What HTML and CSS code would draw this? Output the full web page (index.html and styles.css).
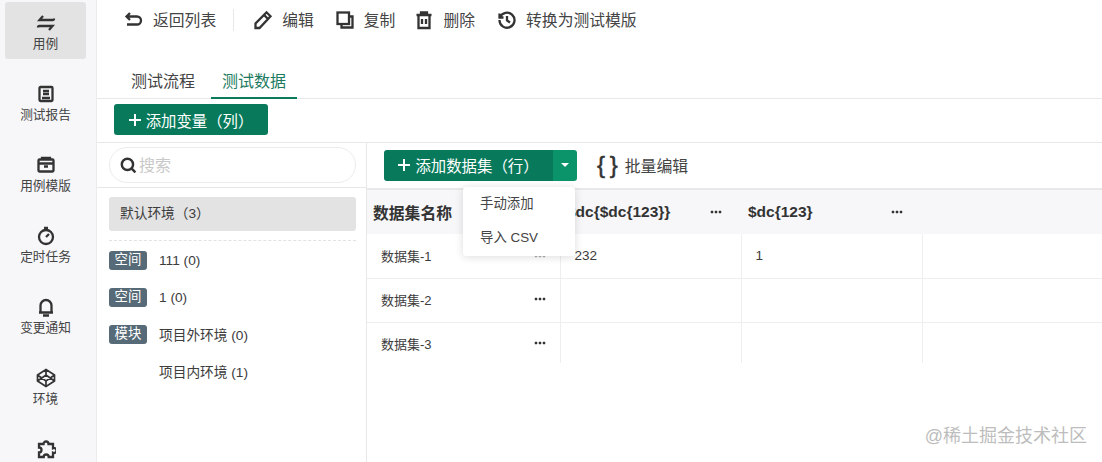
FILE: index.html
```html
<!DOCTYPE html>
<html lang="zh-CN">
<head>
<meta charset="utf-8">
<title>测试数据</title>
<link rel="stylesheet" href="styles.css">
</head>
<body>
<aside class="nav">
  <a class="nav-item active">
    <svg class="nav-icon" viewBox="0 0 20 20"><path d="M7 3 3.500 7 H16.500M13 17 16.500 13H3.500M16.500 7q1.500 0 1.500-1.500M2 14.500q0-1.500 1.500-1.500"/></svg>
    <span>用例</span>
  </a>
  <a class="nav-item">
    <svg class="nav-icon" viewBox="0 0 20 20"><rect x="3.500" y="3" width="13" height="14" rx="1"/><path d="M7 7h6M7 10h6M6 14h8"/></svg>
    <span>测试报告</span>
  </a>
  <a class="nav-item">
    <svg class="nav-icon" viewBox="0 0 20 20"><rect x="2.500" y="4.500" width="15" height="12" rx="1"/><path d="M2.500 8.500h15M8 11.500h4M6 4V2.800h8V4"/></svg>
    <span>用例模版</span>
  </a>
  <a class="nav-item">
    <svg class="nav-icon" viewBox="0 0 20 20"><circle cx="10" cy="11" r="7"/><path d="M8 2h4M10 11l3-3"/></svg>
    <span>定时任务</span>
  </a>
  <a class="nav-item">
    <svg class="nav-icon" viewBox="0 0 20 20"><path d="M3 15.500h14M4.500 15.500V8.500a5.500 5.500 0 0 1 11 0v7M7 18.500h6"/></svg>
    <span>变更通知</span>
  </a>
  <a class="nav-item">
    <svg class="nav-icon nav-icon-thin" viewBox="0 0 20 20"><path d="M10 1.500 18.500 7V13L10 18.500 1.500 13V7ZM1.500 7 10 13 18.500 7M1.500 13 10 7 18.500 13M10 1.500V7M10 13V18.500"/></svg>
    <span>环境</span>
  </a>
  <a class="nav-item">
    <svg class="nav-icon" viewBox="0 0 20 20"><path d="M7.500 5a2.500 2.500 0 1 1 5 0H17v4.200a2.500 2.500 0 1 1 0 4.600V18h-4.300a2.500 2.500 0 1 0-5 0H3v-4.500a2.500 2.500 0 1 0 0-5V5Z"/></svg>
  </a>
</aside>

<main class="main">
  <div class="toolbar">
    <button class="tool tool-back">
      <svg class="tool-icon" viewBox="0 0 20 20"><path d="M6 3 2.500 6.500 6 10M3 6.500h10a3.800 3.800 0 0 1 0 8H3"/></svg>
      返回列表
    </button>
    <span class="tool-sep"></span>
    <button class="tool">
      <svg class="tool-icon" viewBox="0 0 20 20"><path d="M2.500 18v-4.500L11 5l4 4-8.500 9ZM11 5l2.500-2.700 4 4L15 9"/></svg>
      编辑
    </button>
    <button class="tool tool-copy">
      <svg class="tool-icon" viewBox="0 0 20 20"><rect x="2.500" y="2.500" width="11.500" height="11.500"/><path d="M14 6.500h3.500v11h-11V14"/></svg>
      复制
    </button>
    <button class="tool tool-trash">
      <svg class="tool-icon" viewBox="0 0 20 20"><path d="M2.500 5h15M7 5V2.500h6V5M4.500 5v13h11V5M8 9v5M12 9v5"/></svg>
      删除
    </button>
    <button class="tool">
      <svg class="tool-icon" viewBox="0 0 20 20"><path d="M2.500 3.500v4h4M3 7.500A7.500 7.500 0 1 1 2.500 10M10 6v4.500l3 2"/></svg>
      转换为测试模版
    </button>
  </div>

  <div class="tabs">
    <span class="tab">测试流程</span>
    <span class="tab tab-on">测试数据</span>
  </div>

  <div class="var-bar">
    <button class="btn btn-var"><svg class="plus" viewBox="0 0 12 12"><path d="M6 0v12M0 6h12"/></svg>添加变量（列）</button>
  </div>

  <div class="content">
    <section class="env">
      <div class="search-wrap">
        <div class="search">
          <svg class="search-icon" viewBox="0 0 16 16"><circle cx="7" cy="7" r="5.300"/><path d="m11 11 3.500 3.500"/></svg>
          <span class="search-ph">搜索</span>
        </div>
      </div>
      <div class="env-list">
        <div class="env-default">默认环境（3）</div>
        <div class="env-row"><span class="tag">空间</span><span>111 (0)</span></div>
        <div class="env-row"><span class="tag">空间</span><span>1 (0)</span></div>
        <div class="env-row"><span class="tag">模块</span><span class="env-cjk">项目外环境 (0)</span></div>
        <div class="env-row"><span class="tag tag-empty"></span><span class="env-cjk">项目内环境 (1)</span></div>
      </div>
    </section>

    <section class="data">
      <div class="data-bar">
        <div class="split">
          <button class="btn btn-add"><svg class="plus" viewBox="0 0 12 12"><path d="M6 0v12M0 6h12"/></svg>添加数据集（行）</button>
          <button class="btn btn-caret"><span class="caret"></span></button>
        </div>
        <button class="batch"><span class="braces">{ }</span>批量编辑</button>
      </div>

      <table class="grid">
        <colgroup><col class="c-name"><col class="c-var"><col class="c-var"><col></colgroup>
        <thead>
          <tr>
            <th class="th-name"><div class="cell-flex">数据集名称</div></th>
            <th><div class="cell-flex">$dc{$dc{123}}<span class="dots"></span></div></th>
            <th><div class="cell-flex">$dc{123}<span class="dots"></span></div></th>
            <th></th>
          </tr>
        </thead>
        <tbody>
          <tr><td class="td-name"><div class="cell-flex">数据集-1<span class="dots dots-dim"></span></div></td><td>232</td><td>1</td><td></td></tr>
          <tr class="row-mid"><td class="td-name"><div class="cell-flex">数据集-2<span class="dots"></span></div></td><td></td><td></td><td></td></tr>
          <tr class="row-last"><td class="td-name"><div class="cell-flex">数据集-3<span class="dots"></span></div></td><td></td><td></td><td></td></tr>
        </tbody>
      </table>

      <div class="menu">
        <div class="menu-item">手动添加</div>
        <div class="menu-item">导入 CSV</div>
      </div>
    </section>
  </div>
</main>
<div class="watermark">@稀土掘金技术社区</div>
</body>
</html>
```
FILE: styles.css
```css
* { box-sizing: border-box; }
html, body { height: 100%; }
body {
  margin: 0;
  display: flex;
  height: 462px;
  overflow: hidden;
  background: #fff;
  color: #3c3c3c;
  font-family: "Liberation Sans", "Noto Sans CJK SC", sans-serif;
  font-size: 13.700px;
}
button { font: inherit; border: 0; background: none; padding: 0; color: inherit; }
svg { fill: none; stroke: #333; stroke-width: 2.300; }

/* Sidebar */
.nav {
  width: 97px;
  flex: none;
  background: #f7f7fa;
  border-right: 1px solid #ececec;
  padding: 2px 10px 0 5px;
  display: flex;
  flex-direction: column;
  gap: 14px;
}
.nav-item {
  height: 57px;
  flex: none;
  border-radius: 3px;
  padding-top: 11px;
  display: flex;
  flex-direction: column;
  align-items: center;
  gap: 2px;
  font-size: 12.700px;
  line-height: 18px;
  color: #444;
  white-space: nowrap;
}
.nav-item.active { background: #e3e3e3; }
.nav-icon { width: 20px; height: 20px; }
.nav-icon-thin { stroke-width: 1.700; }

/* Main column */
.main { flex: 1; min-width: 0; display: flex; flex-direction: column; }
.toolbar {
  height: 39px;
  flex: none;
  display: flex;
  align-items: center;
  padding-left: 27px;
  font-size: 15.800px;
}
.tool { display: flex; align-items: center; gap: 9px; margin-right: 21px; color: #444; white-space: nowrap; }
.tool-back { margin-right: 17px; }
.tool-copy { margin-right: 19px; }
.tool-trash { margin-right: 22px; }
.tool-icon { width: 20px; height: 20px; }
.tool-sep { width: 1px; height: 22px; background: #e8e8e8; margin-right: 19px; }

.tabs {
  height: 60px;
  flex: none;
  display: flex;
  align-items: flex-end;
  padding-left: 24px;
  border-bottom: 1px solid #e8e8e8;
  font-size: 16px;
}
.tab { height: 28px; padding: 0 10px; line-height: 24px; color: #444; margin-right: 6px; }
.tab-on { color: #1c7a61; border-bottom: 2px solid #0a7a5b; height: 29px; padding: 0 11px; margin-bottom: -1px; }

.var-bar { height: 44px; flex: none; padding: 5px 0 0 17px; border-bottom: 1px solid #e8e8e8; }
.btn {
  background: #087a5b;
  color: #fff;
  border-radius: 3px;
  font-size: 15.400px;
  white-space: nowrap;
}
.btn-var { width: 154px; height: 31px; display: flex; align-items: center; justify-content: center; }
.plus { width: 12px; height: 12px; stroke: #fff; stroke-width: 2; margin-right: 5px; flex: none; }

.content { flex: 1; min-height: 0; display: flex; }

/* Environments */
.env { width: 270px; flex: none; border-right: 1px solid #e8e8e8; }
.search-wrap { height: 45px; padding: 4px 10px 0 12px; border-bottom: 1px solid #e8e8e8; }
.search {
  height: 36px;
  border: 1px solid #ececec;
  border-radius: 18px;
  display: flex;
  align-items: center;
  padding: 0 0 2px 10px;
  gap: 2px;
  font-size: 16px;
  color: #c9c9c9;
}
.search-icon { width: 17px; height: 17px; margin-top: 2px; }
.env-list { padding: 9px 10px 0 12px; }
.env-default {
  height: 34px;
  background: #e3e3e3;
  border-radius: 3px;
  padding-left: 11px;
  line-height: 33px;
  margin-bottom: 9px;
}
.env-row { height: 37px; display: flex; align-items: center; gap: 12px; white-space: nowrap; }
.env-default + .env-row { border-top: 1px dashed #e2e2e2; height: 39px; padding-top: 1px; }
.env-cjk { padding-bottom: 2px; }
.tag {
  width: 38px;
  height: 19px;
  flex: none;
  border-radius: 3px;
  background: #566a77;
  color: #fff;
  text-align: center;
  line-height: 18px;
  font-size: 13.400px;
}
.tag-empty { background: none; }

/* Data sets */
.data { flex: 1; min-width: 0; position: relative; }
.data-bar { height: 45px; display: flex; align-items: center; padding: 0 0 1px 17px; }
.split { display: flex; height: 31px; }
.btn-add { width: 169px; border-radius: 3px 0 0 3px; display: flex; align-items: center; justify-content: center; }
.btn-caret { width: 24px; background: #0b9369; border-radius: 0 3px 3px 0; display: flex; align-items: center; justify-content: center; }
.caret { border: 4px solid transparent; border-top-color: #fff; border-bottom-width: 0; }
.batch { display: flex; align-items: center; margin-left: 20px; font-size: 15.900px; color: #444; white-space: nowrap; }
.braces { font-size: 24px; color: #333; margin-right: 8px; letter-spacing: -1px; line-height: 1; -webkit-text-stroke: .5px #333; }

.grid { width: 100%; table-layout: fixed; border-collapse: collapse; border-top: 2px solid #e8e8e8; }
.c-name { width: 193px; }
.c-var { width: 181px; }
.grid th {
  height: 45px;
  background: #f7f7f9;
  text-align: left;
  padding: 0 7px;
  font-size: 15.500px;
  color: #333;
  font-weight: 700;
  border-top: 1px solid #efefef;
}
.grid td {
  height: 44px;
  padding: 0 14px;
  border-right: 1px solid #eee;
  border-bottom: 1px solid #eee;
  font-size: 13.500px;
}
.grid .row-mid td { padding-bottom: 2px; }
.grid .row-last td { height: 41px; border-bottom: 0; padding-top: 1px; }
.grid td:last-child { border-right: 0; }
.grid .td-name { font-size: 13px; }
.grid .th-name { padding-left: 6px; font-size: 15.800px; }
.cell-flex { display: flex; align-items: center; justify-content: space-between; white-space: nowrap; }
.grid th .cell-flex { padding-right: 12px; }
.dots {
  width: 12px;
  height: 4px;
  flex: none;
  background: radial-gradient(circle at center, #333 1.200px, transparent 1.700px) 0 0 / 4px 4px repeat-x;
}
.dots-dim { opacity: .4; }

.menu {
  position: absolute;
  top: 44px;
  left: 96px;
  width: 112px;
  height: 69px;
  background: #fff;
  border-radius: 3px;
  box-shadow: 0 1px 8px rgba(0, 0, 0, .14);
}
.menu-item { height: 34px; line-height: 33px; padding-left: 17px; font-size: 13.400px; color: #444; }

.watermark {
  position: absolute;
  right: 15px;
  bottom: 15px;
  font-size: 18px;
  line-height: 22px;
  color: #bdbdbd;
}
```
